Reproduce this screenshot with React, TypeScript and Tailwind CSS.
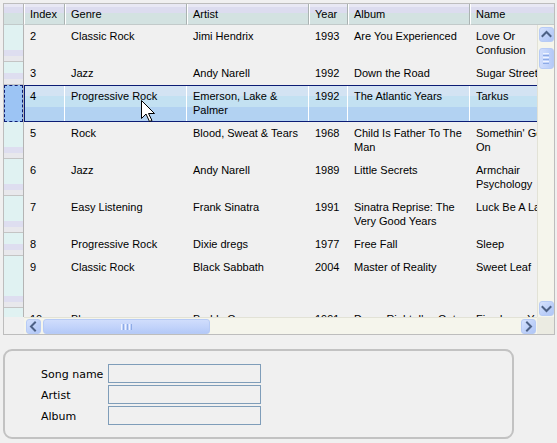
import React from 'react';

type Row = {
  idx: string;
  genre: string[];
  artist: string[];
  year: string;
  album: string[];
  name: string[];
  h: string;
  sel?: boolean;
};

const rows: Row[] = [
  { idx: '2', genre: ['Classic Rock'], artist: ['Jimi Hendrix'], year: '1993', album: ['Are You Experienced'], name: ['Love Or', 'Confusion'], h: 'h-[37px]' },
  { idx: '3', genre: ['Jazz'], artist: ['Andy Narell'], year: '1992', album: ['Down the Road'], name: ['Sugar Street'], h: 'h-[23px]' },
  { idx: '4', genre: ['Progressive Rock'], artist: ['Emerson, Lake &', 'Palmer'], year: '1992', album: ['The Atlantic Years'], name: ['Tarkus'], h: 'h-[37px]', sel: true },
  { idx: '5', genre: ['Rock'], artist: ['Blood, Sweat & Tears'], year: '1968', album: ['Child Is Father To The', 'Man'], name: ["Somethin' Goin'", 'On'], h: 'h-[37px]' },
  { idx: '6', genre: ['Jazz'], artist: ['Andy Narell'], year: '1989', album: ['Little Secrets'], name: ['Armchair', 'Psychology'], h: 'h-[37px]' },
  { idx: '7', genre: ['Easy Listening'], artist: ['Frank Sinatra'], year: '1991', album: ['Sinatra Reprise: The', 'Very Good Years'], name: ['Luck Be A Lady'], h: 'h-[37px]' },
  { idx: '8', genre: ['Progressive Rock'], artist: ['Dixie dregs'], year: '1977', album: ['Free Fall'], name: ['Sleep'], h: 'h-[23px]' },
  { idx: '9', genre: ['Classic Rock'], artist: ['Black Sabbath'], year: '2004', album: ['Master of Reality'], name: ['Sweet Leaf'], h: 'h-[52px]' },
  { idx: '10', genre: ['Blues'], artist: ['Buddy Guy'], year: '1991', album: ["Damn Right, I've Got", 'the Blues'], name: ['Five Long Years'], h: 'h-[37px]' },
];

const cols = [
  { label: 'Index', w: 'w-[41px]' },
  { label: 'Genre', w: 'w-[122px]' },
  { label: 'Artist', w: 'w-[122px]' },
  { label: 'Year', w: 'w-[39px]' },
  { label: 'Album', w: 'w-[122px]' },
  { label: 'Name', w: 'w-[84px]' },
];

const headerBg =
  'bg-[linear-gradient(to_bottom,#e8e8f4_0px,#e8e8f4_3px,#dcdcef_3px,#dcdcef_9px,#d3e2e1_9px,#d3e2e1_100%)]';

function Chevron({ dir }: { dir: 'up' | 'down' | 'left' | 'right' }) {
  const pts: Record<string, string> = {
    up: '3.5,9 7.5,5 11.5,9',
    down: '3.5,6 7.5,10 11.5,6',
    left: '9,3.5 5,7.5 9,11.5',
    right: '6,3.5 10,7.5 6,11.5',
  };
  return (
    <svg width="15" height="15" viewBox="0 0 15 15" className="block">
      <polyline points={pts[dir]} fill="none" stroke="#4d6185" strokeWidth="2" strokeLinecap="square" />
    </svg>
  );
}

function ScrollBtn({ dir }: { dir: 'up' | 'down' | 'left' | 'right' }) {
  return (
    <div className="w-[15px] h-[15px] shrink-0 rounded-[3px] border border-[#b7cbf5] bg-[linear-gradient(135deg,#d6e2fd,#bccff8_60%,#b0c6f6)] overflow-hidden">
      <div className="-m-px">
        <Chevron dir={dir} />
      </div>
    </div>
  );
}

function Cell({ lines, w, sel, first, last }: { lines: string[]; w: string; sel?: boolean; first?: boolean; last?: boolean }) {
  const cls = [
    'shrink-0 overflow-hidden whitespace-nowrap pl-[5px] border-l border-r',
    w,
    sel ? 'pt-[3px]' : 'pt-[4px]',
    sel && first ? 'border-l-[#0c1c74]' : 'border-l-transparent',
    sel && !last ? 'border-r-white' : 'border-r-transparent',
  ].join(' ');
  return (
    <div className={cls}>
      {lines.map((l, i) => (
        <div key={i}>{l}</div>
      ))}
    </div>
  );
}

export default function App() {
  return (
    <div className="relative w-[557px] h-[443px] bg-[#f0f0f0] overflow-hidden pt-[3px] pl-[3px] text-black">
      {/* Grid */}
      <div className="w-[552px] h-[332px] border border-[#bdbdbd] flex flex-col font-['Liberation_Sans',Arial,sans-serif] text-[11px] leading-[14px]">
        {/* header */}
        <div className="flex h-[21px] shrink-0">
          <div className={`w-[20px] shrink-0 border-r border-r-[#b4b4b4] border-b border-b-[#c2caca] ${headerBg}`} />
          {cols.map((c, i) => (
            <div
              key={c.label}
              className={`${c.w} shrink-0 flex items-center pl-[5px] border-l border-l-white border-b border-b-[#c2caca] ${
                i < cols.length - 1 ? 'border-r border-r-[#aab2b2]' : ''
              } ${headerBg}`}
            >
              {c.label}
            </div>
          ))}
        </div>

        {/* body */}
        <div className="flex h-[292px] shrink-0">
          {/* row headers */}
          <div className="w-[20px] shrink-0 flex flex-col overflow-hidden border-r border-r-[#b4b4b4]">
            {rows.map((r) =>
              r.sel ? (
                <div key={r.idx} className={`${r.h} shrink-0 bg-[#9cc4f4] border border-dashed border-[#0c1c74]`} />
              ) : (
                <div key={r.idx} className={`${r.h} shrink-0 flex flex-col`}>
                  <div className="flex-1 bg-[#e0f2f2]" />
                  <div className="h-[6px] bg-[#dedef0]" />
                  <div className="h-[5px] bg-[#e8e8ec]" />
                  <div className="h-px bg-[#c4c4c4]" />
                </div>
              )
            )}
          </div>

          {/* data */}
          <div className="w-[513px] shrink-0 overflow-hidden flex flex-col">
            {rows.map((r) => (
              <div
                key={r.idx}
                className={`${r.h} shrink-0 flex ${
                  r.sel
                    ? 'border-y border-[#0c1c74] bg-[linear-gradient(to_bottom,#d3e3f3_0px,#d3e3f3_10px,#c3e1f2_10px,#c3e1f2_21px,#b2d2f2_21px,#b2d2f2_100%)]'
                    : ''
                }`}
              >
                <Cell lines={[r.idx]} w="w-[41px]" sel={r.sel} first />
                <Cell lines={r.genre} w="w-[122px]" sel={r.sel} />
                <Cell lines={r.artist} w="w-[122px]" sel={r.sel} />
                <Cell lines={[r.year]} w="w-[39px]" sel={r.sel} />
                <Cell lines={r.album} w="w-[122px]" sel={r.sel} />
                <Cell lines={r.name} w="w-[84px]" sel={r.sel} last />
              </div>
            ))}
          </div>

          {/* vertical scrollbar */}
          <div className="w-[17px] shrink-0 bg-[#f5f5ec] border-l border-l-[#e2e2d6] flex flex-col items-center pt-[2px] pb-px">
            <ScrollBtn dir="up" />
            <div className="mt-[6px] w-[15px] h-[21px] rounded-[3px] border border-[#b7cbf5] bg-[linear-gradient(90deg,#d0ddfc,#c0d2fa_60%,#b4c9f7)] flex flex-col items-center justify-center gap-px">
              <div className="w-[6px] h-px bg-[#eef3fe]" />
              <div className="w-[6px] h-px bg-[#8eabe6]" />
              <div className="w-[6px] h-px bg-[#eef3fe]" />
              <div className="w-[6px] h-px bg-[#8eabe6]" />
              <div className="w-[6px] h-px bg-[#eef3fe]" />
              <div className="w-[6px] h-px bg-[#8eabe6]" />
            </div>
            <div className="flex-1" />
            <ScrollBtn dir="down" />
          </div>
        </div>

        {/* horizontal scrollbar row */}
        <div className="flex h-[17px] shrink-0">
          <div className="w-[20px] shrink-0 bg-[#f0f0f0]" />
          <div className="w-[513px] shrink-0 bg-[#f5f5ec] border-t border-t-[#e2e2d6] flex items-start pt-px pl-[2px] pr-px">
            <ScrollBtn dir="left" />
            <div className="ml-[2px] w-[167px] h-[15px] rounded-[3px] border border-[#b7cbf5] bg-[linear-gradient(180deg,#d0ddfc,#c0d2fa_60%,#b4c9f7)] flex items-center justify-center gap-px">
              <div className="w-px h-[6px] bg-[#eef3fe]" />
              <div className="w-px h-[6px] bg-[#8eabe6]" />
              <div className="w-px h-[6px] bg-[#eef3fe]" />
              <div className="w-px h-[6px] bg-[#8eabe6]" />
              <div className="w-px h-[6px] bg-[#eef3fe]" />
              <div className="w-px h-[6px] bg-[#8eabe6]" />
            </div>
            <div className="flex-1" />
            <ScrollBtn dir="right" />
          </div>
          <div className="w-[17px] shrink-0 bg-[#ebebe2]" />
        </div>
      </div>

      {/* Form box */}
      <div className="mt-[14px] w-[511px] h-[90px] border-2 border-[#c2c2c2] rounded-[9px] pl-[36px] pt-[13px] font-['DejaVu_Sans',Verdana,sans-serif] text-[11px]">
        <div className="grid grid-cols-[67px_153px] auto-rows-[19px] gap-y-[2px]">
          <div className="flex items-center pt-[3px]">Song name</div>
          <input type="text" className="h-[19px] w-[153px] border border-[#7f9db9] bg-transparent outline-none" />
          <div className="flex items-center pt-[3px]">Artist</div>
          <input type="text" className="h-[19px] w-[153px] border border-[#7f9db9] bg-transparent outline-none" />
          <div className="flex items-center pt-[3px]">Album</div>
          <input type="text" className="h-[19px] w-[153px] border border-[#7f9db9] bg-transparent outline-none" />
        </div>
      </div>

      {/* mouse cursor */}
      <svg className="absolute left-[141px] top-[100px]" width="16" height="24" viewBox="0 0 16 24">
        <polygon
          points="0.5,0.5 0.5,18.5 5,14 8.5,21.5 11,20.5 7.5,13.5 13.5,13.5"
          fill="#fff"
          stroke="#000"
          strokeWidth="1"
          strokeLinejoin="miter"
        />
      </svg>
    </div>
  );
}
